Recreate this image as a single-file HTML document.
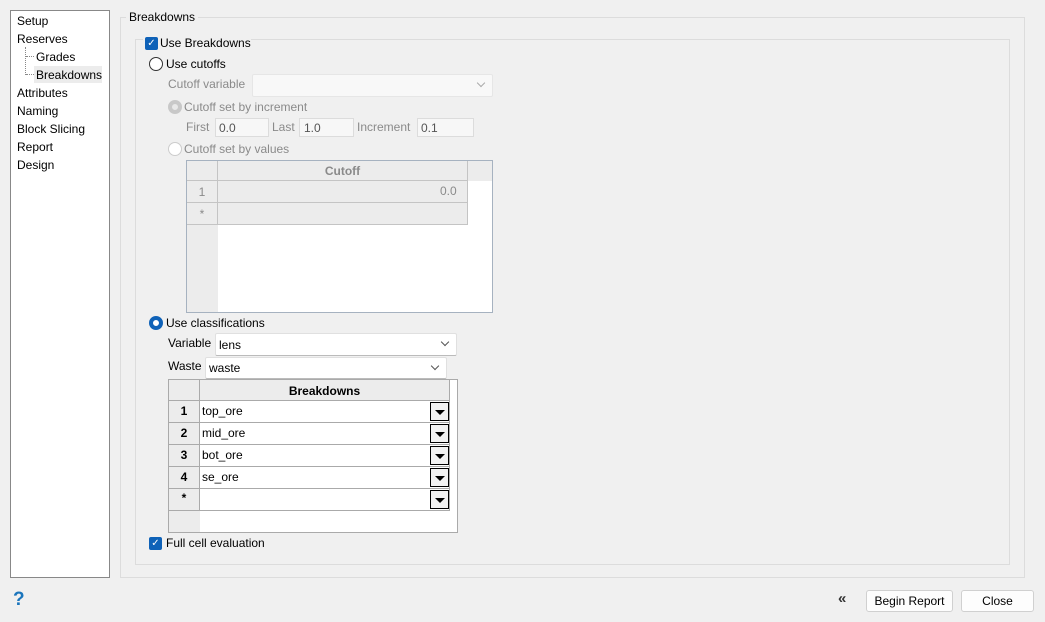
<!DOCTYPE html>
<html><head><style>
*{box-sizing:border-box;margin:0;padding:0}
body{width:1045px;height:622px;background:#f0f0f0;font-family:"Liberation Sans",sans-serif;font-size:12px;color:#000;position:relative;overflow:hidden}
.a{position:absolute;white-space:nowrap}
.g{color:#8a8a8a}
.box{position:absolute;border:1px solid #dcdcdc;background:#f7f7f7}
.cb{position:absolute;width:13px;height:13px;background:#0f62b8;border-radius:2px;color:#fff;font-size:10px;line-height:13px;text-align:center}
.rd{position:absolute;width:14px;height:14px;border-radius:50%;border:1px solid #333;background:#fff}
.combo{position:absolute;background:#fff;border:1px solid #e0e0e0;border-bottom-color:#bbb;border-radius:2px}
.chev{position:absolute;right:8px;top:5px;width:6px;height:6px;border-right:1px solid #555;border-bottom:1px solid #555;transform:rotate(45deg)}
.btn{position:absolute;background:#fdfdfd;border:1px solid #d0d0d0;border-radius:3px;text-align:center;line-height:20px}
.dd{position:absolute;width:19px;height:19px;border:1px solid #000;background:#f2f2f2}
.dd:after{content:"";position:absolute;left:4px;top:7px;border-left:5px solid transparent;border-right:5px solid transparent;border-top:5px solid #000}
</style></head><body>
<div class="a" style="left:10px;top:10px;width:100px;height:568px;background:#fff;border:1px solid #888"></div>
<div class="a" style="left:17px;top:14px">Setup</div>
<div class="a" style="left:17px;top:32px">Reserves</div>
<div class="a" style="left:25px;top:47px;width:1px;height:28px;border-left:1px dotted #888"></div>
<div class="a" style="left:26px;top:56px;width:8px;border-top:1px dotted #888"></div>
<div class="a" style="left:26px;top:74px;width:8px;border-top:1px dotted #888"></div>
<div class="a" style="left:36px;top:50px">Grades</div>
<div class="a" style="left:34px;top:66px;width:68px;height:17px;background:#ececec"></div>
<div class="a" style="left:36px;top:68px">Breakdowns</div>
<div class="a" style="left:17px;top:86px">Attributes</div>
<div class="a" style="left:17px;top:104px">Naming</div>
<div class="a" style="left:17px;top:122px">Block Slicing</div>
<div class="a" style="left:17px;top:140px">Report</div>
<div class="a" style="left:17px;top:158px">Design</div>

<div class="a" style="left:120px;top:17px;width:905px;height:561px;border:1px solid #dcdcdc"></div>
<div class="a" style="left:126px;top:10px;background:#f0f0f0;padding:0 3px">Breakdowns</div>
<div class="a" style="left:135px;top:39px;width:875px;height:526px;border:1px solid #dcdcdc"></div>
<div class="a" style="left:143px;top:34px;width:108px;height:16px;background:#f0f0f0"></div>
<div class="cb" style="left:145px;top:37px">✓</div>
<div class="a" style="left:160px;top:36px">Use Breakdowns</div>
<div class="rd" style="left:149px;top:57px"></div>
<div class="a" style="left:166px;top:57px">Use cutoffs</div>
<div class="a g" style="left:168px;top:77px">Cutoff variable</div>
<div class="combo" style="left:252px;top:74px;width:241px;height:23px;border-color:#e6e6e6;background:#f8f8f8"><div class="chev" style="border-color:#aaa"></div></div>
<div class="rd" style="left:168px;top:100px;border:4px solid #c8c8c8;background:#e8e8e8"></div>
<div class="a g" style="left:184px;top:100px">Cutoff set by increment</div>
<div class="a g" style="left:186px;top:120px">First</div>
<div class="box" style="left:215px;top:118px;width:54px;height:19px"></div><div class="a g" style="left:219px;top:121px;color:#555">0.0</div>
<div class="a g" style="left:272px;top:120px">Last</div>
<div class="box" style="left:299px;top:118px;width:55px;height:19px"></div><div class="a" style="left:304px;top:121px;color:#555">1.0</div>
<div class="a g" style="left:357px;top:120px">Increment</div>
<div class="box" style="left:417px;top:118px;width:57px;height:19px"></div><div class="a" style="left:421px;top:121px;color:#555">0.1</div>
<div class="rd" style="left:168px;top:142px;border-color:#ccc"></div>
<div class="a g" style="left:184px;top:142px">Cutoff set by values</div>
<div class="a" style="left:186px;top:160px;width:307px;height:153px;border:1px solid #a6b2c0;background:#fff"></div>
<div class="a" style="left:187px;top:161px;width:31px;height:151px;background:#ececec"></div>
<div class="a" style="left:187px;top:161px;width:305px;height:20px;background:#ececec"></div>
<div class="a" style="left:187px;top:180px;width:281px;height:45px;background:#ececec;border-top:1px solid #c4c4c4;border-bottom:1px solid #c4c4c4"></div>
<div class="a" style="left:187px;top:202px;width:281px;border-top:1px solid #c4c4c4"></div>
<div class="a" style="left:217px;top:161px;height:64px;border-left:1px solid #c4c4c4"></div>
<div class="a" style="left:467px;top:161px;height:64px;border-left:1px solid #c4c4c4"></div>
<div class="a g" style="left:218px;top:164px;width:249px;text-align:center;font-weight:bold">Cutoff</div>
<div class="a g" style="left:187px;top:185px;width:30px;text-align:center">1</div>
<div class="a g" style="left:440px;top:184px">0.0</div>
<div class="a g" style="left:187px;top:207px;width:30px;text-align:center">*</div>

<div class="rd" style="left:149px;top:316px;border:4px solid #0f62b8"></div>
<div class="a" style="left:166px;top:316px">Use classifications</div>
<div class="a" style="left:168px;top:336px">Variable</div>
<div class="combo" style="left:215px;top:333px;width:242px;height:23px"><div class="chev"></div></div>
<div class="a" style="left:219px;top:338px">lens</div>
<div class="a" style="left:168px;top:359px">Waste</div>
<div class="combo" style="left:205px;top:357px;width:242px;height:22px"><div class="chev"></div></div>
<div class="a" style="left:209px;top:361px">waste</div>
<div class="a" style="left:168px;top:379px;width:290px;height:154px;border:1px solid #aaa;background:#fff"></div>
<div class="a" style="left:169px;top:380px;width:31px;height:152px;background:#ececec"></div>
<div class="a" style="left:169px;top:380px;width:281px;height:21px;background:#ececec;border-bottom:1px solid #aaa"></div>
<div class="a" style="left:199px;top:380px;height:131px;border-left:1px solid #aaa"></div>
<div class="a" style="left:449px;top:380px;height:131px;border-left:1px solid #aaa"></div>
<div class="a" style="left:200px;top:384px;width:249px;text-align:center;font-weight:bold">Breakdowns</div>
<div class="a" style="left:169px;top:422px;width:281px;border-top:1px solid #aaa"></div>
<div class="a" style="left:169px;top:444px;width:281px;border-top:1px solid #aaa"></div>
<div class="a" style="left:169px;top:466px;width:281px;border-top:1px solid #aaa"></div>
<div class="a" style="left:169px;top:488px;width:281px;border-top:1px solid #aaa"></div>
<div class="a" style="left:169px;top:510px;width:281px;border-top:1px solid #aaa"></div>
<div class="a" style="left:169px;top:404px;width:30px;text-align:center;font-weight:bold">1</div><div class="a" style="left:202px;top:404px">top_ore</div><div class="dd" style="left:430px;top:402px"></div>
<div class="a" style="left:169px;top:426px;width:30px;text-align:center;font-weight:bold">2</div><div class="a" style="left:202px;top:426px">mid_ore</div><div class="dd" style="left:430px;top:424px"></div>
<div class="a" style="left:169px;top:448px;width:30px;text-align:center;font-weight:bold">3</div><div class="a" style="left:202px;top:448px">bot_ore</div><div class="dd" style="left:430px;top:446px"></div>
<div class="a" style="left:169px;top:470px;width:30px;text-align:center;font-weight:bold">4</div><div class="a" style="left:202px;top:470px">se_ore</div><div class="dd" style="left:430px;top:468px"></div>
<div class="a" style="left:169px;top:491px;width:30px;text-align:center;font-weight:bold">*</div><div class="dd" style="left:430px;top:490px"></div>
<div class="cb" style="left:149px;top:537px">✓</div>
<div class="a" style="left:166px;top:536px">Full cell evaluation</div>

<div class="a" style="left:13px;top:589px;font-size:19px;font-weight:bold;color:#1b75bc">?</div>
<div class="a" style="left:838px;top:590px;font-size:15px;font-weight:bold;color:#333">«</div>
<div class="btn" style="left:866px;top:590px;width:87px;height:22px">Begin Report</div>
<div class="btn" style="left:961px;top:590px;width:73px;height:22px">Close</div>
</body></html>
